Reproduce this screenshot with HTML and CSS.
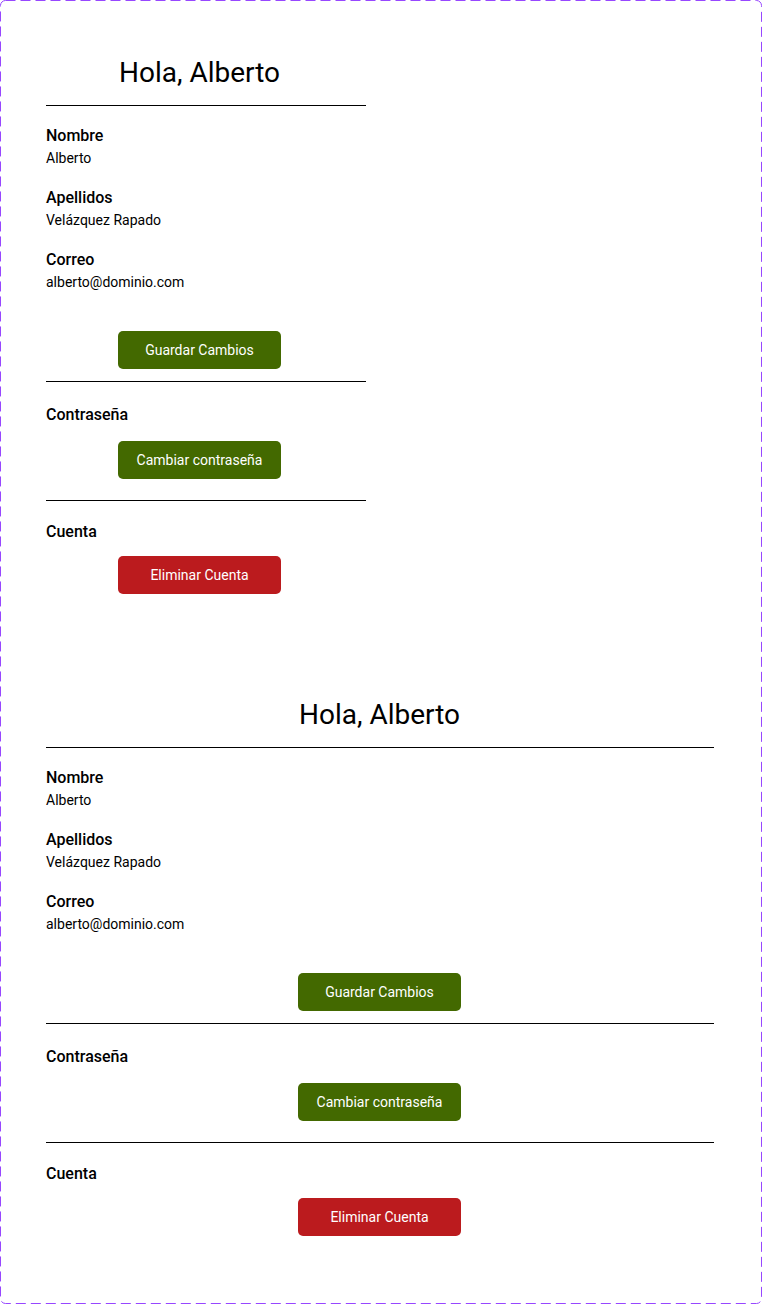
FILE: index.html
```html
<!DOCTYPE html>
<html lang="es">
<head>
<meta charset="utf-8">
<title>Perfil</title>
<link rel="stylesheet" href="styles.css">
</head>
<body>
<div class="frame">
  <section class="profile narrow">
    <h1 class="title">Hola, Alberto</h1>
    <hr class="rule">
    <div class="fields">
      <div class="field"><div class="label">Nombre</div><div class="value">Alberto</div></div>
      <div class="field"><div class="label">Apellidos</div><div class="value">Velázquez Rapado</div></div>
      <div class="field"><div class="label">Correo</div><div class="value">alberto@dominio.com</div></div>
    </div>
    <div class="actions actions-save"><button class="btn btn-green">Guardar Cambios</button></div>
    <hr class="rule">
    <div class="label section-pass">Contraseña</div>
    <div class="actions actions-pass"><button class="btn btn-green">Cambiar contraseña</button></div>
    <hr class="rule">
    <div class="label section-account">Cuenta</div>
    <div class="actions actions-account"><button class="btn btn-red">Eliminar Cuenta</button></div>
  </section>

  <section class="profile wide">
    <h1 class="title">Hola, Alberto</h1>
    <hr class="rule">
    <div class="fields">
      <div class="field"><div class="label">Nombre</div><div class="value">Alberto</div></div>
      <div class="field"><div class="label">Apellidos</div><div class="value">Velázquez Rapado</div></div>
      <div class="field"><div class="label">Correo</div><div class="value">alberto@dominio.com</div></div>
    </div>
    <div class="actions actions-save"><button class="btn btn-green">Guardar Cambios</button></div>
    <hr class="rule">
    <div class="label section-pass">Contraseña</div>
    <div class="actions actions-pass"><button class="btn btn-green">Cambiar contraseña</button></div>
    <hr class="rule">
    <div class="label section-account">Cuenta</div>
    <div class="actions actions-account"><button class="btn btn-red">Eliminar Cuenta</button></div>
  </section>
</div>
</body>
</html>
```
FILE: styles.css
```css
html, body {
  margin: 0;
  padding: 0;
  background: #ffffff;
}

body {
  font-family: Roboto, "Liberation Sans", sans-serif;
  color: #000000;
}

.frame {
  width: 762px;
  height: 1304px;
  box-sizing: border-box;
  padding: 57px 0 0 46px;
  display: flex;
  flex-direction: column;
  gap: 105px;
  background-image: url("data:image/svg+xml,%3Csvg xmlns='http://www.w3.org/2000/svg' width='762' height='1304'%3E%3Crect x='0.5' y='0.5' width='761' height='1303' rx='5' ry='5' fill='none' stroke='%239747FF' stroke-width='1' stroke-dasharray='10 5'/%3E%3C/svg%3E");
  background-repeat: no-repeat;
}

.profile {
  display: flex;
  flex-direction: column;
}

.narrow { width: 320px; }
.wide { width: 668px; }

.title {
  margin: 0 0 16px 0;
  font-size: 28px;
  line-height: 32px;
  font-weight: 400;
  text-align: center;
}

.narrow .title,
.narrow .actions { width: 307px; }

.wide .title,
.wide .actions { width: 667px; }

.rule {
  margin: 0;
  border: 0;
  height: 1px;
  background: #000000;
}

.fields {
  padding-top: 19px;
  display: flex;
  flex-direction: column;
  gap: 20px;
}

.label {
  padding-top: 1px;
  font-size: 16px;
  line-height: 20px;
  font-weight: 500;
}

.value {
  margin-top: 3px;
  font-size: 14px;
  line-height: 18px;
  font-weight: 400;
}

.actions {
  display: flex;
  justify-content: center;
}

.actions-save { margin: 40px 0 12px; }
.section-pass { margin-top: 22px; }
.actions-pass { margin: 16px 0 21px; }
.section-account { margin-top: 20px; }
.actions-account { margin-top: 14px; }

.btn {
  width: 163px;
  height: 38px;
  border: 0;
  border-radius: 5px;
  font-family: Roboto, "Liberation Sans", sans-serif;
  font-size: 14px;
  color: #ffffff;
  padding: 0;
}

.btn-green { background: #436900; }
.btn-red { background: #bb1b1e; }
```
